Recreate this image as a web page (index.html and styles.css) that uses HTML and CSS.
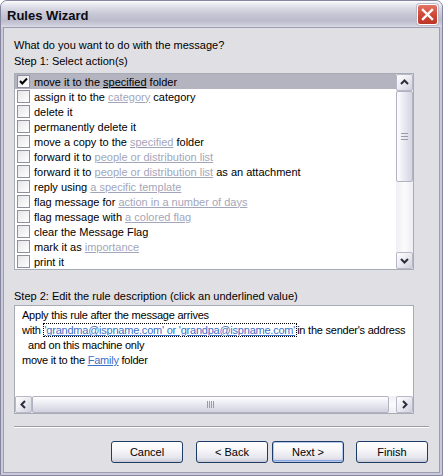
FILE: index.html
```html
<!DOCTYPE html>
<html>
<head>
<meta charset="utf-8">
<title>Rules Wizard</title>
<link rel="stylesheet" href="styles.css">
</head>
<body>
<div class="window">
  <div class="titlebar">
    <span class="title">Rules Wizard</span>
    <span class="close"><svg width="21" height="21" viewBox="0 0 21 21"><path d="M6 6 L15 15 M15 6 L6 15" stroke="#fff" stroke-width="2.4" stroke-linecap="square"/></svg></span>
  </div>
  <div class="client">
    <div class="label">What do you want to do with the message?</div>
    <div class="label">Step 1: Select action(s)</div>
    <div class="listbox">
      <div class="items">
        <div class="item sel"><span class="cb"><svg width="11" height="11" viewBox="0 0 11 11"><path d="M2 5 L4.3 7.5 L9 2.5" fill="none" stroke="#000" stroke-width="2"/></svg></span><span>move it to the <span class="u">specified</span> folder</span></div>
        <div class="item"><span class="cb"></span><span>assign it to the <span class="lnk">category</span> category</span></div>
        <div class="item"><span class="cb"></span><span>delete it</span></div>
        <div class="item"><span class="cb"></span><span>permanently delete it</span></div>
        <div class="item"><span class="cb"></span><span>move a copy to the <span class="lnk">specified</span> folder</span></div>
        <div class="item"><span class="cb"></span><span>forward it to <span class="lnk">people or distribution list</span></span></div>
        <div class="item"><span class="cb"></span><span>forward it to <span class="lnk">people or distribution list</span> as an attachment</span></div>
        <div class="item"><span class="cb"></span><span>reply using <span class="lnk">a specific template</span></span></div>
        <div class="item"><span class="cb"></span><span>flag message for <span class="lnk">action in a number of days</span></span></div>
        <div class="item"><span class="cb"></span><span>flag message with <span class="lnk">a colored flag</span></span></div>
        <div class="item"><span class="cb"></span><span>clear the Message Flag</span></div>
        <div class="item"><span class="cb"></span><span>mark it as <span class="lnk">importance</span></span></div>
        <div class="item"><span class="cb"></span><span>print it</span></div>
      </div>
      <div class="vscroll">
        <div class="sbtn"><svg width="15" height="15" viewBox="0 0 15 15"><path d="M4 9 L7.5 5.5 L11 9" fill="none" stroke="#2c2c3c" stroke-width="2"/></svg></div>
        <div class="vthumb"><svg width="9" height="7" viewBox="0 0 9 7"><path d="M1 0.5 H8 M1 3.5 H8 M1 6.5 H8" stroke="#9a9aae" stroke-width="1"/></svg></div>
        <div class="vtrack"></div>
        <div class="sbtn"><svg width="15" height="15" viewBox="0 0 15 15"><path d="M4 6 L7.5 9.5 L11 6" fill="none" stroke="#2c2c3c" stroke-width="2"/></svg></div>
      </div>
    </div>
    <div class="label step2">Step 2: Edit the rule description (click an underlined value)</div>
    <div class="descbox">
      <div class="desc">
        <div class="line">Apply this rule after the message arrives</div>
        <div class="line">with <span class="focus"><span class="blue">'grandma@ispname.com' or 'grandpa@ispname.com'</span></span>in the sender's address</div>
        <div class="line indent">and on this machine only</div>
        <div class="line">move it to the <span class="blue">Family</span> folder</div>
      </div>
      <div class="hscroll">
        <div class="sbtn"><svg width="15" height="15" viewBox="0 0 15 15"><path d="M9 4 L5.5 7.5 L9 11" fill="none" stroke="#2c2c3c" stroke-width="2"/></svg></div>
        <div class="hthumb"><svg width="7" height="9" viewBox="0 0 7 9"><path d="M0.5 1 V8 M2.5 1 V8 M4.5 1 V8 M6.5 1 V8" stroke="#9a9aae" stroke-width="1"/></svg></div>
        <div class="hgap"></div>
        <div class="sbtn"><svg width="15" height="15" viewBox="0 0 15 15"><path d="M6 4 L9.5 7.5 L6 11" fill="none" stroke="#2c2c3c" stroke-width="2"/></svg></div>
      </div>
    </div>
    <div class="sep"></div>
    <div class="buttons">
      <button class="btn">Cancel</button>
      <button class="btn back">&lt; Back</button>
      <button class="btn next">Next &gt;</button>
      <button class="btn finish">Finish</button>
    </div>
  </div>
</div>
</body>
</html>
```

FILE: styles.css
```css
* { box-sizing: border-box; }
html, body { margin: 0; padding: 0; background: #ffffff; }
body {
  font-family: "Liberation Sans", Arial, sans-serif;
  font-size: 11px;
  color: #000;
}
.window {
  width: 443px;
  height: 476px;
  border: 1px solid #85859f;
  border-radius: 7px 7px 0 0;
  background: #c9c9d7;
  display: flex;
  flex-direction: column;
  padding: 0 2px 2px;
  overflow: hidden;
}
.titlebar {
  height: 26px;
  margin: 0 -2px;
  display: flex;
  align-items: center;
  justify-content: space-between;
  padding: 2px 4px 0 6px;
  background: linear-gradient(to bottom, #ffffff 0%, #ececf2 10%, #d8d8e3 30%, #c4c4d3 55%, #bcbccc 75%, #cacad8 90%, #dcdce6 100%);
}
.title {
  font-weight: bold;
  font-size: 13px;
  color: #0b0b12;
  padding-top: 1px;
}
.close {
  width: 21px;
  height: 21px;
  border: 1px solid #ffffff;
  border-radius: 3px;
  background: linear-gradient(to bottom, #e47565 0%, #d24c3b 45%, #bd3525 100%);
  box-shadow: 0 0 0 1px #b9b9c8;
  display: flex;
  align-items: center;
  justify-content: center;
  margin-top: -2px;
}
.close svg { display: block; margin: -1px; }
.client {
  flex: 1;
  border: 1px solid #9c9cb3;
  background: #e0dfe3;
  padding: 9px 9px 0 10px;
  display: flex;
  flex-direction: column;
}
.label { line-height: 16px; white-space: nowrap; }
.step2 { margin-top: 18px; }
.listbox {
  margin-top: 4px;
  width: 400px;
  height: 197px;
  border: 1px solid #a5acb5;
  background: #fff;
  display: flex;
}
.items { flex: 1; overflow: hidden; }
.item {
  height: 15px;
  display: flex;
  align-items: center;
  white-space: nowrap;
  padding-left: 2px;
}
.item.sel { background: #b3b4c0; }
.cb {
  width: 13px;
  height: 13px;
  border: 1px solid #8e909c;
  background: linear-gradient(135deg, #e6e6ea 0%, #ffffff 100%);
  margin-right: 4px;
  display: flex;
  align-items: center;
  justify-content: center;
  flex: none;
}
.cb svg { display: block; }
.u { text-decoration: underline; }
.lnk { color: #a3a6ba; text-decoration: underline; }
.vscroll {
  width: 17px;
  display: flex;
  flex-direction: column;
  background: linear-gradient(to right, #f0f0f4, #fbfbfd 50%, #eeeef3);
}
.sbtn {
  width: 17px;
  height: 17px;
  flex: none;
  border: 1px solid #b8b8c8;
  border-radius: 2px;
  background: linear-gradient(135deg, #ffffff 0%, #ececf2 45%, #d0d0dd 100%);
  display: flex;
  align-items: center;
  justify-content: center;
}
.sbtn svg { display: block; }
.vthumb {
  height: 91px;
  flex: none;
  border: 1px solid #b2b2c3;
  border-radius: 2px;
  background: linear-gradient(to right, #ffffff 0%, #ececf3 40%, #d5d5e1 100%);
  display: flex;
  align-items: center;
  justify-content: center;
}
.vthumb svg, .hthumb svg { display: block; }
.vtrack { flex: 1; }
.descbox {
  margin-top: 1px;
  width: 400px;
  height: 109px;
  border: 1px solid #a5acb5;
  background: #fff;
  display: flex;
  flex-direction: column;
}
.desc {
  flex: 1;
  padding: 2px 0 0 7px;
  white-space: nowrap;
  overflow: hidden;
  letter-spacing: -0.23px;
}
.line { line-height: 15px; height: 15px; }
.indent { padding-left: 6px; }
.blue { color: #3d6fc6; text-decoration: underline; }
.focus {
  border: 1px dotted #000;
  padding: 0 1px 0 0;
  margin-left: 0;
}
.hscroll {
  height: 17px;
  display: flex;
  background: linear-gradient(to bottom, #f0f0f4, #fbfbfd 50%, #eeeef3);
}
.hthumb {
  flex: none;
  width: 357px;
  border: 1px solid #b2b2c3;
  border-radius: 2px;
  background: linear-gradient(to bottom, #ffffff 0%, #ececf3 40%, #d2d2df 100%);
  display: flex;
  align-items: center;
  justify-content: center;
}
.hgap { flex: 1; }
.sep {
  margin-top: 12px;
  width: 415px;
  height: 2px;
  border-top: 1px solid #9d9da6;
  border-bottom: 1px solid #ffffff;
}
.buttons {
  margin-top: 13px;
  width: 415px;
  display: flex;
  justify-content: flex-end;
  padding-right: 1px;
}
.btn {
  width: 72px;
  height: 22px;
  padding: 0;
  font-family: "Liberation Sans", Arial, sans-serif;
  font-size: 11px;
  color: #000;
  border: 1px solid #1d3d66;
  border-radius: 3px;
  background: linear-gradient(to bottom, #ffffff 0%, #f6f6f9 40%, #e4e4ec 80%, #c9c9d6 100%);
}
.back { margin-left: 13px; }
.next { margin-left: 4px; box-shadow: inset 0 0 0 1px #b5c8ef, inset 0 -1px 0 1px #8aa5e4; }
.finish { margin-left: 12px; }
```
